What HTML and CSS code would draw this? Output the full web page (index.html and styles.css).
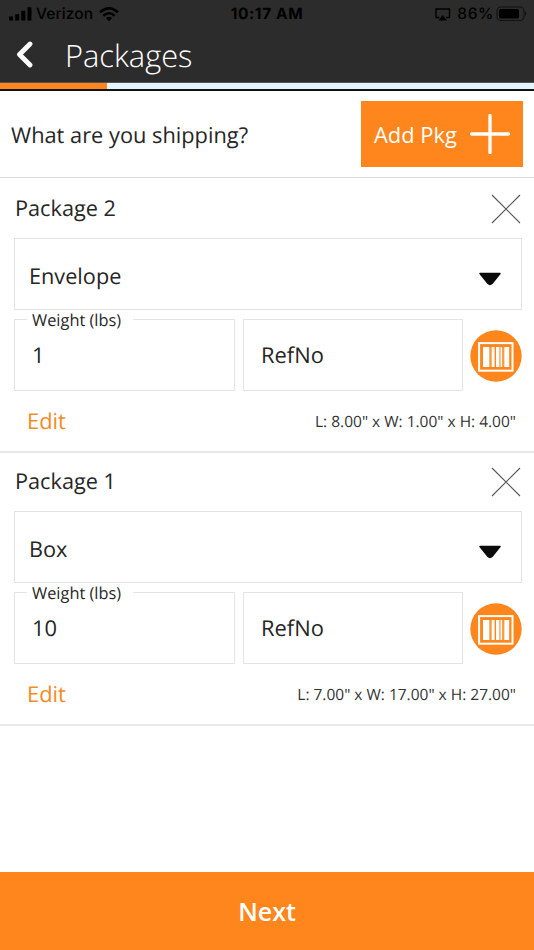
FILE: index.html
```
<!DOCTYPE html>
<html lang="en">
<head>
<meta charset="utf-8">
<title>Packages</title>
<link rel="stylesheet" href="styles.css">
</head>
<body>
<svg width="0" height="0" class="defs" aria-hidden="true">
  <symbol id="close" viewBox="0 0 30 30"><path d="M1 1L29 29M29 1L1 29" fill="none" stroke="#555" stroke-width="1.1"/></symbol>
  <symbol id="caret" viewBox="0 0 24 14"><path d="M2 1.500H22L14 11.500Q12 13.300 10 11.500Z" fill="#0b0b0b" stroke="#0b0b0b" stroke-width="1.500" stroke-linejoin="round"/></symbol>
  <symbol id="barcode" viewBox="0 0 52 52">
    <circle cx="26" cy="26" r="25.7" fill="#ff861c"/>
    <rect x="9.1" y="13.1" width="33.4" height="27.6" fill="none" stroke="#fff" stroke-width="2"/>
    <path d="M13 17h6.400v20H13zM21.600 17h3v20h-3zM26 17h3.400v20H26zM30.500 17h1.700v20h-1.700zM34.300 17h4.900v20h-4.900z" fill="#fff"/>
    <path d="M20 17.500v19M33.200 17.500v19" stroke="#ffb67b" stroke-width=".6"/>
  </symbol>
</svg>
<div class="screen">
  <header class="header">
    <div class="status">
      <div class="status-left">
        <svg width="24" height="14" viewBox="0 0 24 14"><path d="M0 9.500h4v4H0zM6.200 7.200h4v6.300h-4zM12.300 3.800h4v9.700h-4zM18.500.3h4v13.200h-4z"/></svg>
        <span class="carrier">Verizon</span>
        <svg class="wifi" width="20" height="15" viewBox="0 0 20 15"><path d="M1 5.300Q10-2.700 19 5.300M4.300 8.800Q10 3.700 15.700 8.800" fill="none" stroke="#000" stroke-width="2.500"/><path d="M6.800 11Q10 8.400 13.200 11L10 14.300Z"/></svg>
      </div>
      <span class="clock">10:17 AM</span>
      <div class="status-right">
        <svg width="16" height="13" viewBox="0 0 16 13"><path d="M4.500 9.500H1V1H14.500V9.500H11" fill="none" stroke="#000" stroke-width="1.400"/><path d="M7.750 7L12 12.500H3.500Z"/></svg>
        <span class="charge">86%</span>
        <svg width="31" height="16" viewBox="0 0 31 16"><rect x="1" y="1" width="27" height="13.500" rx="4" fill="none" stroke="#111" stroke-width="1.100"/><rect x="3" y="3" width="20" height="9.500" rx="1.800"/><path d="M29 5.200Q31.500 7.700 29 10.200Z" fill="#111"/></svg>
      </div>
    </div>
    <div class="titlebar">
      <svg class="back" width="20" height="28" viewBox="0 0 20 28"><path d="M15 3L4.500 13.500L15 24" fill="none" stroke="#fff" stroke-width="4.800" stroke-linecap="round" stroke-linejoin="round"/></svg>
      <h1>Packages</h1>
    </div>
  </header>
  <div class="progress"><div class="progress-fill"></div></div>

  <main>
    <section class="intro">
      <h2>What are you shipping?</h2>
      <button class="add"><span>Add Pkg</span>
        <svg width="40" height="40" viewBox="0 0 40 40"><path d="M20 1.500V38.500M1.500 20H38.500" stroke="#fff" stroke-width="3.300" stroke-linecap="round"/></svg>
      </button>
    </section>

    <section class="package">
      <div class="package-head"><h3>Package 2</h3><svg class="close" width="30" height="30"><use href="#close"/></svg></div>
      <div class="select"><span>Envelope</span><svg class="caret" width="24" height="14"><use href="#caret"/></svg></div>
      <div class="fields">
        <div class="field"><span class="label">Weight (lbs)</span><span class="value">1</span></div>
        <div class="field ref"><span class="value">RefNo</span></div>
        <svg class="scan" width="52" height="52"><use href="#barcode"/></svg>
      </div>
      <div class="package-foot"><a class="edit">Edit</a><span class="size">L: 8.00" x W: 1.00" x H: 4.00"</span></div>
    </section>

    <section class="package">
      <div class="package-head"><h3>Package 1</h3><svg class="close" width="30" height="30"><use href="#close"/></svg></div>
      <div class="select"><span>Box</span><svg class="caret" width="24" height="14"><use href="#caret"/></svg></div>
      <div class="fields">
        <div class="field"><span class="label">Weight (lbs)</span><span class="value">10</span></div>
        <div class="field ref"><span class="value">RefNo</span></div>
        <svg class="scan" width="52" height="52"><use href="#barcode"/></svg>
      </div>
      <div class="package-foot"><a class="edit">Edit</a><span class="size">L: 7.00" x W: 17.00" x H: 27.00"</span></div>
    </section>
  </main>

  <button class="next">Next</button>
</div>
</body>
</html>
```
FILE: styles.css
```
* { box-sizing: border-box; }
body { margin: 0; background: #fff; color: #262626; font: 21.9px/30px "Open Sans", sans-serif; text-rendering: geometricPrecision; }
h1, h2, h3 { margin: 0; font-size: inherit; font-weight: 400; }
h2, h3, .add span { padding-top: 2px; }
button { border: 0; font: inherit; color: #fff; background: #ff861c; }
svg { display: block; flex: none; }
.defs { position: absolute; }
.screen { height: 950px; display: flex; flex-direction: column; }
main { flex: 1; }

.header { height: 82px; background: #2c2c2c; }
.status { height: 28px; display: grid; grid-template-columns: 1fr auto 1fr; align-items: center; padding: 0 7px 0 9px; color: #000; font: 600 15.5px/20px Inter, sans-serif; }
.status-left, .status-right { display: flex; align-items: center; }
.status-right { justify-content: flex-end; }
.carrier { margin: 0 6px 0 3px; font-weight: 500; letter-spacing: .1px; }
.charge { margin: 0 2px 0 6px; font-weight: 500; letter-spacing: .6px; }
.clock { font-weight: 700; letter-spacing: .6px; margin-right: 2px; }
.titlebar { height: 54px; display: flex; align-items: center; padding-left: 15px; }
h1 { margin-left: 30px; padding-top: 2px; color: #fff; font-size: 30.800px; font-weight: 300; line-height: 42px; }

.progress { height: 9px; background: #e4f5fc; border-top: 1px solid #555; border-bottom: 2px solid #111; }
.progress-fill { width: 20%; height: 100%; background: #ff861c; }

.intro { height: 87px; display: flex; align-items: center; justify-content: space-between; padding: 0 11px; border-bottom: 1px solid #ddd; }
.intro h2 { padding-top: 3px; font-size: 21.800px; }
.add { width: 162px; height: 66px; padding: 0 13px 0 13px; display: flex; align-items: center; justify-content: space-between; }

.package { height: 273px; padding: 0 12px 0 14px; box-shadow: 0 2px #e9e9e9; }
.package-head { height: 60px; display: flex; align-items: center; justify-content: space-between; padding: 1px 0 0 1px; }
.package-head h3 { padding-top: 1px; font-size: 21.700px; }
.close { margin-right: 1px; }
.select { height: 72px; display: flex; align-items: center; justify-content: space-between; padding: 5px 19px 0 14px; border: 1.500px solid #e4e4e4; font-size: 21.700px; }
.caret { margin-top: 5px; }
.fields { display: flex; align-items: center; margin-top: 9px; }
.field { position: relative; width: 221px; height: 72px; padding: 21px 17px; border: 1.500px solid #e4e4e4; }
.ref { width: 220px; margin: 0 8px 0 8px; }
.scan { margin: 2px 0 0 -1px; }
.label { position: absolute; left: 12px; top: -9px; padding: 0 12px 0 5px; background: #fff; font-size: 16.400px; line-height: 18px; }
.value { display: block; }
.package-foot { height: 62px; display: flex; align-items: center; justify-content: space-between; padding: 0 6px 0 13px; }
.edit { color: #f68b1f; }
.size { margin-top: -3px; font-size: 15.500px; color: #333; }

.next { height: 78px; font-size: 25px; font-weight: 600; }
```
